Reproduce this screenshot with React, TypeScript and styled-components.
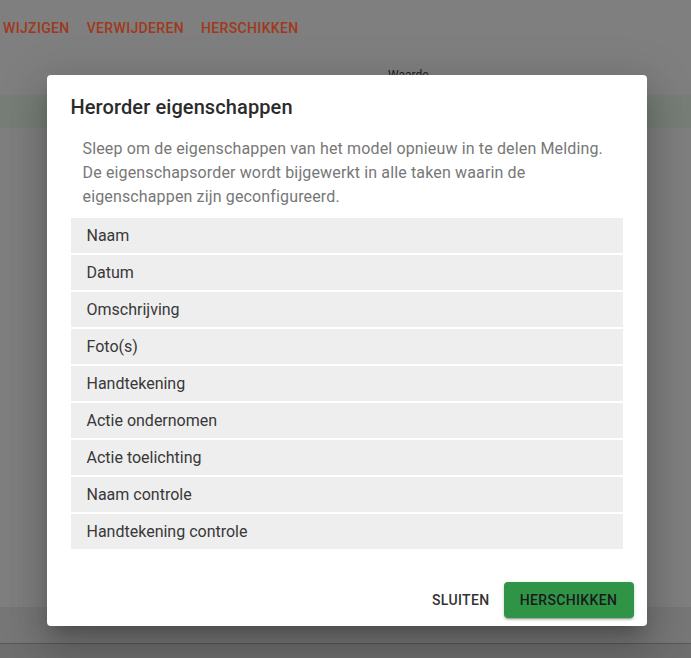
import React from "react";
import styled, { createGlobalStyle } from "styled-components";

const Global = createGlobalStyle`
  html, body { margin: 0; padding: 0; }
  body {
    width: 691px;
    height: 658px;
    overflow: hidden;
    font-family: Roboto, "Liberation Sans", Arial, sans-serif;
    background: #7f7f7f;
  }
`;

const Page = styled.div`
  position: relative;
  width: 691px;
  height: 658px;
  display: flex;
  flex-direction: column;
  background: #7f7f7f;
`;

const Toolbar = styled.div`
  height: 56px;
  display: flex;
  align-items: center;
  gap: 17px;
  padding-left: 3px;
`;

const ToolButton = styled.span`
  font-size: 14px;
  font-weight: 500;
  letter-spacing: 0.025em;
  color: #a0381c;
  text-transform: uppercase;
`;

const HeaderRow = styled.div`
  height: 39px;
  box-sizing: border-box;
  display: flex;
  align-items: flex-start;
  padding: 13px 0 0 388px;
`;

const HeaderCell = styled.span`
  font-size: 12px;
  color: #1e1e1e;
  line-height: 12px;
`;

const GreenBand = styled.div`
  height: 33px;
  background: #777e78;
`;

const Spacer = styled.div`
  flex: 1;
`;

const FooterBand = styled.div`
  height: 36px;
  background: #777777;
  border-bottom: 1px solid #585858;
`;

const FooterRest = styled.div`
  height: 14px;
  background: #6e6e6e;
`;

const Scrim = styled.div`
  position: absolute;
  inset: 0;
  display: flex;
  align-items: flex-start;
  justify-content: center;
  padding: 75px 0 0 2px;
`;

const Dialog = styled.div`
  width: 600px;
  background: #ffffff;
  border-radius: 4px;
  box-shadow: 0 11px 15px -7px rgba(0, 0, 0, 0.2),
    0 24px 38px 3px rgba(0, 0, 0, 0.14), 0 9px 46px 8px rgba(0, 0, 0, 0.12);
  display: flex;
  flex-direction: column;
`;

const Title = styled.h2`
  margin: 0;
  padding: 16px 24px 10px;
  font-size: 20px;
  line-height: 32px;
  font-weight: 500;
  letter-spacing: 0.005em;
  color: #2b2b2b;
`;

const Body = styled.div`
  padding: 4px 24px 20px;
`;

const Description = styled.p`
  margin: 0 0 9px;
  padding: 0 12px;
  font-size: 16px;
  line-height: 24px;
  color: #777777;
  letter-spacing: 0.009em;
`;

const List = styled.ul`
  list-style: none;
  margin: 0;
  padding: 0;
  display: flex;
  flex-direction: column;
  gap: 2px;
`;

const Item = styled.li`
  height: 35px;
  display: flex;
  align-items: center;
  padding: 0 16px;
  background: #eeeeee;
  font-size: 16px;
  color: #383838;
  cursor: move;
`;

const Actions = styled.div`
  display: flex;
  justify-content: flex-end;
  align-items: center;
  padding: 13px 13px 8px 8px;
`;

const Button = styled.button<{ $primary?: boolean }>`
  height: 36px;
  padding: 0 ${(p) => (p.$primary ? "16px" : "14px")};
  border: none;
  border-radius: 4px;
  font-family: Roboto, "Liberation Sans", Arial, sans-serif;
  font-size: 14px;
  font-weight: 500;
  letter-spacing: 0.025em;
  text-transform: uppercase;
  background: ${(p) => (p.$primary ? "#2f9446" : "transparent")};
  color: ${(p) => (p.$primary ? "#1a1a1a" : "#333333")};
  box-shadow: ${(p) =>
    p.$primary
      ? "0 3px 1px -2px rgba(0,0,0,.2), 0 2px 2px 0 rgba(0,0,0,.14), 0 1px 5px 0 rgba(0,0,0,.12)"
      : "none"};
  min-width: ${(p) => (p.$primary ? "130px" : "64px")};
`;

const items = [
  "Naam",
  "Datum",
  "Omschrijving",
  "Foto(s)",
  "Handtekening",
  "Actie ondernomen",
  "Actie toelichting",
  "Naam controle",
  "Handtekening controle",
];

export default function App() {
  return (
    <>
      <Global />
      <Page>
        <Toolbar>
          <ToolButton>Wijzigen</ToolButton>
          <ToolButton>Verwijderen</ToolButton>
          <ToolButton>Herschikken</ToolButton>
        </Toolbar>
        <HeaderRow>
          <HeaderCell>Waarde</HeaderCell>
        </HeaderRow>
        <GreenBand />
        <Spacer />
        <FooterBand />
        <FooterRest />
        <Scrim>
          <Dialog>
            <Title>Herorder eigenschappen</Title>
            <Body>
              <Description>
                Sleep om de eigenschappen van het model opnieuw in te delen
                Melding. De eigenschapsorder wordt bijgewerkt in alle taken
                waarin de eigenschappen zijn geconfigureerd.
              </Description>
              <List>
                {items.map((it) => (
                  <Item key={it}>{it}</Item>
                ))}
              </List>
            </Body>
            <Actions>
              <Button>Sluiten</Button>
              <Button $primary>Herschikken</Button>
            </Actions>
          </Dialog>
        </Scrim>
      </Page>
    </>
  );
}
